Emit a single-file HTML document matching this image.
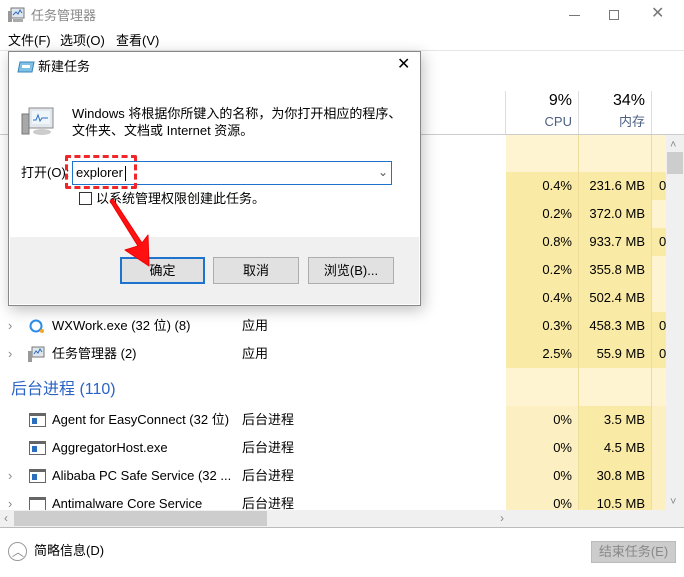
<!DOCTYPE html>
<html><head><meta charset="utf-8"><style>
*{margin:0;padding:0;box-sizing:border-box}
body{width:684px;height:577px;overflow:hidden;background:#fff;font-family:"Liberation Sans","Noto Sans CJK SC",sans-serif;font-size:13px;line-height:16px;color:#000;position:relative}
.a{position:absolute;white-space:nowrap}
.r{text-align:right}
.g{color:#888}
</style></head><body>
<svg class="a" style="left:8px;top:7px" width="18" height="16" viewBox="0 0 18 16"><rect x="3" y="1" width="13" height="10" fill="#dfe6ee" stroke="#777"/><path d="M5 8 L8 5 L10 7 L12 3 L14 6" stroke="#2a6ec0" fill="none"/><rect x="0" y="4" width="4" height="11" fill="#999"/><rect x="5" y="12" width="10" height="3" fill="#aaa"/></svg>
<div class="a g" style="left:31px;top:8px;font-size:13px">任务管理器</div>
<div class="a" style="left:569px;top:15px;width:11px;height:1px;background:#777"></div>
<div class="a" style="left:609px;top:10px;width:10px;height:10px;border:1px solid #777"></div>
<div class="a" style="left:651px;top:6px;font-size:16px;color:#777">✕</div>
<div class="a" style="left:8px;top:33px">文件(F)</div>
<div class="a" style="left:60px;top:33px">选项(O)</div>
<div class="a" style="left:116px;top:33px">查看(V)</div>
<div class="a" style="left:0;top:50px;width:684px;height:1px;background:#e6e6e6"></div>
<div class="a" style="left:505px;top:91px;width:1px;height:43px;background:#ddd"></div>
<div class="a" style="left:578px;top:91px;width:1px;height:43px;background:#ddd"></div>
<div class="a" style="left:651px;top:91px;width:1px;height:43px;background:#ddd"></div>
<div class="a r" style="left:506px;top:92px;width:66px;font-size:16px;line-height:18px">9%</div>
<div class="a r" style="left:578px;top:92px;width:67px;font-size:16px;line-height:18px">34%</div>
<div class="a r" style="left:506px;top:114px;width:66px;color:#4d6082">CPU</div>
<div class="a r" style="left:578px;top:114px;width:67px;color:#4d6082">内存</div>
<div class="a" style="left:0;top:134px;width:684px;height:1px;background:#ccc"></div>
<div class="a" style="left:506px;top:135px;width:160px;height:375px;background:#fff4d1"></div>
<div class="a" style="left:506px;top:172px;width:160px;height:196px;background:#f9eaa6"></div>
<div class="a" style="left:651px;top:200px;width:15px;height:28px;background:#fff4d1"></div>
<div class="a" style="left:651px;top:256px;width:15px;height:56px;background:#fff4d1"></div>
<div class="a" style="left:506px;top:406px;width:160px;height:104px;background:#fcf0c2"></div>
<div class="a" style="left:578px;top:406px;width:73px;height:104px;background:#f9eaa6"></div>
<div class="a" style="left:578px;top:135px;width:1px;height:375px;background:#eedc9a"></div>
<div class="a" style="left:651px;top:135px;width:1px;height:375px;background:#eedc9a"></div>
<div class="a r" style="left:506px;top:178px;width:66px">0.4%</div><div class="a r" style="left:578px;top:178px;width:67px">231.6 MB</div><div class="a" style="left:659px;top:178px">0</div>
<div class="a r" style="left:506px;top:206px;width:66px">0.2%</div><div class="a r" style="left:578px;top:206px;width:67px">372.0 MB</div>
<div class="a r" style="left:506px;top:234px;width:66px">0.8%</div><div class="a r" style="left:578px;top:234px;width:67px">933.7 MB</div><div class="a" style="left:659px;top:234px">0</div>
<div class="a r" style="left:506px;top:262px;width:66px">0.2%</div><div class="a r" style="left:578px;top:262px;width:67px">355.8 MB</div>
<div class="a r" style="left:506px;top:290px;width:66px">0.4%</div><div class="a r" style="left:578px;top:290px;width:67px">502.4 MB</div>
<div class="a r" style="left:506px;top:318px;width:66px">0.3%</div><div class="a r" style="left:578px;top:318px;width:67px">458.3 MB</div><div class="a" style="left:659px;top:318px">0</div>
<div class="a r" style="left:506px;top:346px;width:66px">2.5%</div><div class="a r" style="left:578px;top:346px;width:67px">55.9 MB</div><div class="a" style="left:659px;top:346px">0</div>
<div class="a r" style="left:506px;top:412px;width:66px">0%</div><div class="a r" style="left:578px;top:412px;width:67px">3.5 MB</div>
<div class="a r" style="left:506px;top:440px;width:66px">0%</div><div class="a r" style="left:578px;top:440px;width:67px">4.5 MB</div>
<div class="a r" style="left:506px;top:468px;width:66px">0%</div><div class="a r" style="left:578px;top:468px;width:67px">30.8 MB</div>
<div class="a r" style="left:506px;top:496px;width:66px;height:14px;overflow:hidden">0%</div><div class="a r" style="left:578px;top:496px;width:67px;height:14px;overflow:hidden">10.5 MB</div>
<div class="a g" style="left:8px;top:318px">›</div>
<svg class="a" style="left:28px;top:318px" width="18" height="16"><circle cx="8" cy="8" r="5.5" stroke="#2d8ceb" stroke-width="2" fill="none"/><circle cx="14" cy="13" r="2" fill="#f5a623"/></svg>
<div class="a" style="left:52px;top:318px">WXWork.exe (32 位) (8)</div><div class="a" style="left:242px;top:318px">应用</div>
<div class="a g" style="left:8px;top:346px">›</div>
<svg class="a" style="left:28px;top:346px" width="18" height="16"><rect x="4" y="1" width="12" height="10" fill="#dfe6ee" stroke="#777"/><path d="M6 8 L8 5 L10 7 L12 3 L14 6" stroke="#2a6ec0" fill="none"/><rect x="0" y="5" width="4" height="11" fill="#999"/></svg>
<div class="a" style="left:52px;top:346px">任务管理器 (2)</div><div class="a" style="left:242px;top:346px">应用</div>
<div class="a" style="left:11px;top:380px;font-size:16px;line-height:20px;color:#2b63c5">后台进程 (110)</div>
<div class="a" style="left:29px;top:413px;width:17px;height:14px;border:1px solid #666;border-top-width:3px;background:#fff"><div style="position:absolute;left:2px;top:2px;width:5px;height:6px;background:#2a6ec0"></div></div>
<div class="a" style="left:52px;top:412px">Agent for EasyConnect (32 位)</div><div class="a" style="left:242px;top:412px">后台进程</div>
<div class="a" style="left:29px;top:441px;width:17px;height:14px;border:1px solid #666;border-top-width:3px;background:#fff"><div style="position:absolute;left:2px;top:2px;width:5px;height:6px;background:#2a6ec0"></div></div>
<div class="a" style="left:52px;top:440px">AggregatorHost.exe</div><div class="a" style="left:242px;top:440px">后台进程</div>
<div class="a g" style="left:8px;top:468px">›</div>
<div class="a" style="left:29px;top:469px;width:17px;height:14px;border:1px solid #666;border-top-width:3px;background:#fff"><div style="position:absolute;left:2px;top:2px;width:5px;height:6px;background:#2a6ec0"></div></div>
<div class="a" style="left:52px;top:468px">Alibaba PC Safe Service (32 ...</div><div class="a" style="left:242px;top:468px">后台进程</div>
<div class="a" style="left:0;top:496px;width:506px;height:14px;overflow:hidden">
<div class="a g" style="left:8px;top:0">›</div>
<div class="a" style="left:29px;top:1px;width:17px;height:14px;border:1px solid #666;border-top-width:3px"></div>
<div class="a" style="left:52px;top:0">Antimalware Core Service</div><div class="a" style="left:242px;top:0">后台进程</div></div>
<div class="a" style="left:666px;top:135px;width:18px;height:375px;background:#f0f0f0"></div>
<div class="a g" style="left:670px;top:137px;font-size:11px">˄</div>
<div class="a" style="left:667px;top:152px;width:16px;height:22px;background:#cdcdcd"></div>
<div class="a g" style="left:670px;top:494px;font-size:11px">˅</div>
<div class="a" style="left:0;top:510px;width:684px;height:17px;background:#f0f0f0"></div>
<div class="a" style="left:14px;top:511px;width:253px;height:15px;background:#cdcdcd"></div>
<div class="a g" style="left:4px;top:510px;font-size:12px">‹</div>
<div class="a g" style="left:500px;top:510px;font-size:12px">›</div>
<div class="a" style="left:0;top:527px;width:684px;height:1px;background:#bbb"></div>
<div class="a" style="left:8px;top:542px;width:19px;height:19px;border:1px solid #999;border-radius:50%"></div>
<div class="a g" style="left:12px;top:544px;font-size:12px">︿</div>
<div class="a" style="left:34px;top:543px">简略信息(D)</div>
<div class="a" style="left:591px;top:541px;width:85px;height:22px;background:#ccc;border:1px solid #bbb;color:#888;text-align:center;line-height:20px">结束任务(E)</div>
<div class="a" style="left:8px;top:51px;width:413px;height:255px;box-shadow:2px 4px 14px rgba(0,0,0,.25);background:#fff;border:1px solid #888"></div>
<svg class="a" style="left:17px;top:61px" width="18" height="12"><path d="M3 1 H17 L15 11 H1 Z" fill="#7fc0e6" stroke="#3a86b8"/><rect x="5" y="4" width="8" height="3" fill="#fff"/></svg>
<div class="a" style="left:38px;top:59px">新建任务</div>
<div class="a" style="left:397px;top:57px;font-size:16px">✕</div>
<div class="a" style="left:10px;top:237px;width:409px;height:67px;background:#f0f0f0"></div>
<svg class="a" style="left:21px;top:106px" width="34" height="30"><rect x="8" y="2" width="24" height="20" fill="#e3e8ee" stroke="#888"/><rect x="11" y="5" width="18" height="13" fill="#eef5fb"/><path d="M12 14 L15 14 L17 9 L19 15 L21 12 L27 12" stroke="#2a6ec0" fill="none"/><rect x="1" y="8" width="7" height="20" fill="#a8a8a8" stroke="#777"/><ellipse cx="21" cy="26" rx="9" ry="3" fill="#ccc"/></svg>
<div class="a" style="left:72px;top:106px">Windows 将根据你所键入的名称，为你打开相应的程序、</div>
<div class="a" style="left:72px;top:123px">文件夹、文档或 Internet 资源。</div>
<div class="a" style="left:21px;top:165px">打开(O):</div>
<div class="a" style="left:72px;top:161px;width:320px;height:24px;border:1px solid #1e74cc;background:#fff"></div>
<div class="a" style="left:76px;top:165px">explorer</div>
<div class="a" style="left:125px;top:166px;width:1px;height:15px;background:#000"></div>
<div class="a" style="left:378px;top:164px;color:#555;font-size:12px">⌄</div>
<div class="a" style="left:65px;top:155px;width:72px;height:34px;border:3px dashed #f0262b;border-radius:2px"></div>
<div class="a" style="left:79px;top:192px;width:13px;height:13px;border:1px solid #333;background:#fff"></div>
<div class="a" style="left:96px;top:191px">以系统管理权限创建此任务。</div>
<div class="a" style="left:120px;top:257px;width:85px;height:27px;border:2px solid #1e74cc;background:#e1e1e1;text-align:center;line-height:23px">确定</div>
<div class="a" style="left:213px;top:257px;width:86px;height:27px;border:1px solid #adadad;background:#e1e1e1;text-align:center;line-height:25px">取消</div>
<div class="a" style="left:308px;top:257px;width:86px;height:27px;border:1px solid #adadad;background:#e1e1e1;text-align:center;line-height:25px">浏览(B)...</div>
<svg class="a" style="left:0;top:0" width="684" height="577"><path d="M110 201 L138 246 L125 250 L149 266 L148 235 L142 243 L113 199 Z" fill="#f11" stroke="#e00" stroke-linejoin="round"/></svg>
</body></html>
